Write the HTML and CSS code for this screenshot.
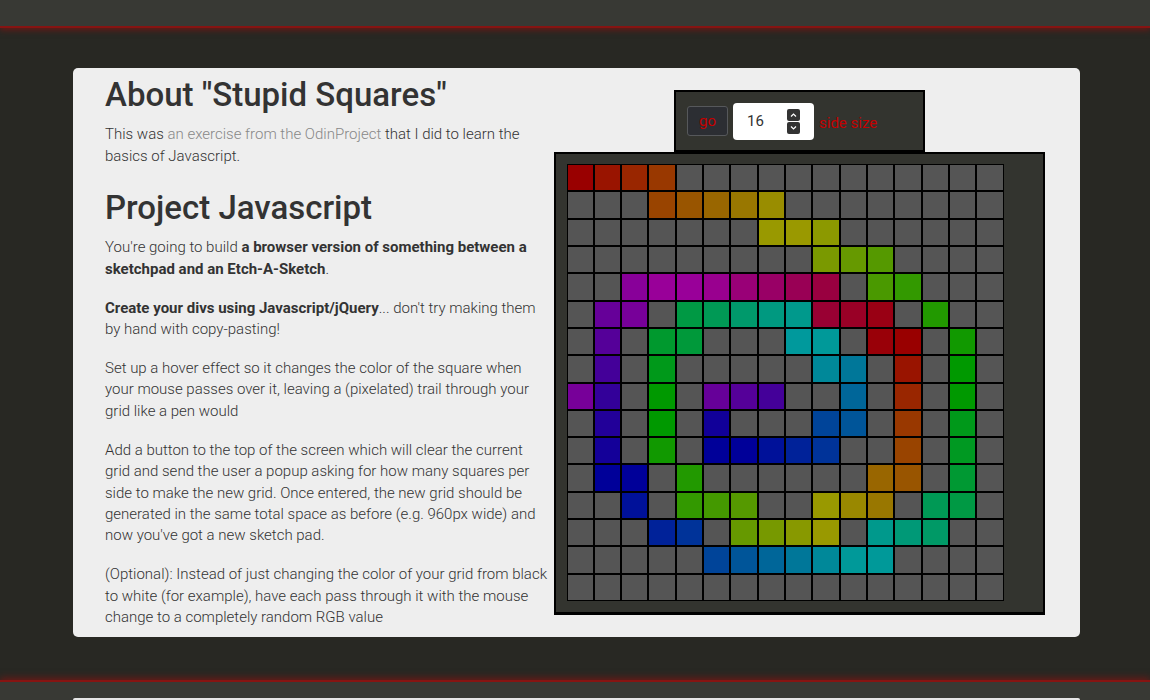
FILE: index.html
```html
<!DOCTYPE html>
<html lang="en">
<head>
<meta charset="utf-8">
<title>Stupid Squares</title>
<link rel="stylesheet" href="styles.css">
</head>
<body>
<header class="topbar"></header>
<main class="card">
  <section class="about">
    <h1>About "Stupid Squares"</h1>
    <p>This was <a href="#">an exercise from the OdinProject</a> that I did to learn the basics of Javascript.</p>
    <h2>Project Javascript</h2>
    <p>You're going to build <strong>a browser version of something between a sketchpad and an Etch-A-Sketch</strong>.</p>
    <p><strong>Create your divs using Javascript/jQuery</strong>... don't try making them by hand with copy-pasting!</p>
    <p>Set up a hover effect so it changes the color of the square when your mouse passes over it, leaving a (pixelated) trail through your grid like a pen would</p>
    <p>Add a button to the top of the screen which will clear the current grid and send the user a popup asking for how many squares per side to make the new grid. Once entered, the new grid should be generated in the same total space as before (e.g. 960px wide) and now you've got a new sketch pad.</p>
    <p>(Optional): Instead of just changing the color of your grid from black to white (for example), have each pass through it with the mouse change to a completely random RGB value</p>
  </section>
  <section class="pad">
    <div class="controls">
      <button class="go">go</button>
      <div class="num">
        <span class="num-value">16</span>
        <svg class="spin" width="13" height="25" viewBox="0 0 13 25">
          <rect x="0" y="0" width="13" height="12" rx="2" fill="#333"/>
          <rect x="0" y="13" width="13" height="12" rx="2" fill="#333"/>
          <polyline points="4,7.5 6.5,5 9,7.5" fill="none" stroke="#fff" stroke-width="1.2"/>
          <polyline points="4,17.5 6.5,20 9,17.5" fill="none" stroke="#fff" stroke-width="1.2"/>
        </svg>
      </div>
      <span class="label">side size</span>
    </div>
    <div class="frame">
      <div class="grid">
        <div class="cell" style="background:#990000"></div><div class="cell" style="background:#991400"></div><div class="cell" style="background:#992600"></div><div class="cell" style="background:#993800"></div><div class="cell"></div><div class="cell"></div><div class="cell"></div><div class="cell"></div><div class="cell"></div><div class="cell"></div><div class="cell"></div><div class="cell"></div><div class="cell"></div><div class="cell"></div><div class="cell"></div><div class="cell"></div>
        <div class="cell"></div><div class="cell"></div><div class="cell"></div><div class="cell" style="background:#994400"></div><div class="cell" style="background:#995500"></div><div class="cell" style="background:#996600"></div><div class="cell" style="background:#997700"></div><div class="cell" style="background:#998d00"></div><div class="cell"></div><div class="cell"></div><div class="cell"></div><div class="cell"></div><div class="cell"></div><div class="cell"></div><div class="cell"></div><div class="cell"></div>
        <div class="cell"></div><div class="cell"></div><div class="cell"></div><div class="cell"></div><div class="cell"></div><div class="cell"></div><div class="cell"></div><div class="cell" style="background:#999900"></div><div class="cell" style="background:#9a9900"></div><div class="cell" style="background:#8c9900"></div><div class="cell"></div><div class="cell"></div><div class="cell"></div><div class="cell"></div><div class="cell"></div><div class="cell"></div>
        <div class="cell"></div><div class="cell"></div><div class="cell"></div><div class="cell"></div><div class="cell"></div><div class="cell"></div><div class="cell"></div><div class="cell"></div><div class="cell"></div><div class="cell" style="background:#7a9900"></div><div class="cell" style="background:#669900"></div><div class="cell" style="background:#559900"></div><div class="cell"></div><div class="cell"></div><div class="cell"></div><div class="cell"></div>
        <div class="cell"></div><div class="cell"></div><div class="cell" style="background:#880099"></div><div class="cell" style="background:#990099"></div><div class="cell" style="background:#990099"></div><div class="cell" style="background:#99008f"></div><div class="cell" style="background:#990077"></div><div class="cell" style="background:#990066"></div><div class="cell" style="background:#990055"></div><div class="cell" style="background:#990040"></div><div class="cell"></div><div class="cell" style="background:#4a9900"></div><div class="cell" style="background:#339900"></div><div class="cell"></div><div class="cell"></div><div class="cell"></div>
        <div class="cell"></div><div class="cell" style="background:#660099"></div><div class="cell" style="background:#770099"></div><div class="cell"></div><div class="cell" style="background:#009944"></div><div class="cell" style="background:#009955"></div><div class="cell" style="background:#00996b"></div><div class="cell" style="background:#009980"></div><div class="cell" style="background:#00998c"></div><div class="cell" style="background:#990033"></div><div class="cell" style="background:#990026"></div><div class="cell" style="background:#990014"></div><div class="cell"></div><div class="cell" style="background:#229900"></div><div class="cell"></div><div class="cell"></div>
        <div class="cell"></div><div class="cell" style="background:#550099"></div><div class="cell"></div><div class="cell" style="background:#00992e"></div><div class="cell" style="background:#00993a"></div><div class="cell"></div><div class="cell"></div><div class="cell"></div><div class="cell" style="background:#00999c"></div><div class="cell" style="background:#009999"></div><div class="cell"></div><div class="cell" style="background:#990008"></div><div class="cell" style="background:#990000"></div><div class="cell"></div><div class="cell" style="background:#119900"></div><div class="cell"></div>
        <div class="cell"></div><div class="cell" style="background:#440099"></div><div class="cell"></div><div class="cell" style="background:#00991a"></div><div class="cell"></div><div class="cell"></div><div class="cell"></div><div class="cell"></div><div class="cell"></div><div class="cell" style="background:#008899"></div><div class="cell" style="background:#007799"></div><div class="cell"></div><div class="cell" style="background:#991400"></div><div class="cell"></div><div class="cell" style="background:#009900"></div><div class="cell"></div>
        <div class="cell" style="background:#770099"></div><div class="cell" style="background:#330099"></div><div class="cell"></div><div class="cell" style="background:#009900"></div><div class="cell"></div><div class="cell" style="background:#660099"></div><div class="cell" style="background:#550099"></div><div class="cell" style="background:#440099"></div><div class="cell"></div><div class="cell"></div><div class="cell" style="background:#006699"></div><div class="cell"></div><div class="cell" style="background:#992600"></div><div class="cell"></div><div class="cell" style="background:#009900"></div><div class="cell"></div>
        <div class="cell"></div><div class="cell" style="background:#220099"></div><div class="cell"></div><div class="cell" style="background:#009900"></div><div class="cell"></div><div class="cell" style="background:#110099"></div><div class="cell"></div><div class="cell"></div><div class="cell"></div><div class="cell" style="background:#004499"></div><div class="cell" style="background:#005599"></div><div class="cell"></div><div class="cell" style="background:#993800"></div><div class="cell"></div><div class="cell" style="background:#00991a"></div><div class="cell"></div>
        <div class="cell"></div><div class="cell" style="background:#140099"></div><div class="cell"></div><div class="cell" style="background:#119900"></div><div class="cell"></div><div class="cell" style="background:#000099"></div><div class="cell" style="background:#000099"></div><div class="cell" style="background:#001199"></div><div class="cell" style="background:#002299"></div><div class="cell" style="background:#003399"></div><div class="cell"></div><div class="cell"></div><div class="cell" style="background:#994400"></div><div class="cell"></div><div class="cell" style="background:#009922"></div><div class="cell"></div>
        <div class="cell"></div><div class="cell" style="background:#000099"></div><div class="cell" style="background:#000099"></div><div class="cell"></div><div class="cell" style="background:#229900"></div><div class="cell"></div><div class="cell"></div><div class="cell"></div><div class="cell"></div><div class="cell"></div><div class="cell"></div><div class="cell" style="background:#996600"></div><div class="cell" style="background:#995500"></div><div class="cell"></div><div class="cell" style="background:#009933"></div><div class="cell"></div>
        <div class="cell"></div><div class="cell"></div><div class="cell" style="background:#001199"></div><div class="cell"></div><div class="cell" style="background:#339900"></div><div class="cell" style="background:#449900"></div><div class="cell" style="background:#559900"></div><div class="cell"></div><div class="cell"></div><div class="cell" style="background:#999900"></div><div class="cell" style="background:#998800"></div><div class="cell" style="background:#997700"></div><div class="cell"></div><div class="cell" style="background:#009955"></div><div class="cell" style="background:#009944"></div><div class="cell"></div>
        <div class="cell"></div><div class="cell"></div><div class="cell"></div><div class="cell" style="background:#002299"></div><div class="cell" style="background:#003399"></div><div class="cell"></div><div class="cell" style="background:#669900"></div><div class="cell" style="background:#779900"></div><div class="cell" style="background:#889900"></div><div class="cell" style="background:#999900"></div><div class="cell"></div><div class="cell" style="background:#00998c"></div><div class="cell" style="background:#009977"></div><div class="cell" style="background:#009966"></div><div class="cell"></div><div class="cell"></div>
        <div class="cell"></div><div class="cell"></div><div class="cell"></div><div class="cell"></div><div class="cell"></div><div class="cell" style="background:#004499"></div><div class="cell" style="background:#005599"></div><div class="cell" style="background:#006699"></div><div class="cell" style="background:#007799"></div><div class="cell" style="background:#008899"></div><div class="cell" style="background:#009999"></div><div class="cell" style="background:#009999"></div><div class="cell"></div><div class="cell"></div><div class="cell"></div><div class="cell"></div>
        <div class="cell"></div><div class="cell"></div><div class="cell"></div><div class="cell"></div><div class="cell"></div><div class="cell"></div><div class="cell"></div><div class="cell"></div><div class="cell"></div><div class="cell"></div><div class="cell"></div><div class="cell"></div><div class="cell"></div><div class="cell"></div><div class="cell"></div><div class="cell"></div>
      </div>
    </div>
  </section>
</main>
<footer class="bottombar">
  <div class="next-card"></div>
</footer>
</body>
</html>
```
FILE: styles.css
```css
html, body {
  margin: 0;
  padding: 0;
}

body {
  background: #282823;
  font-family: Roboto, "Noto Sans", "Liberation Sans", sans-serif;
  color: #333;
  overflow: hidden;
  height: 700px;
}

.topbar {
  position: relative;
  z-index: 1;
  height: 26px;
  background: #383934;
  border-bottom: 2px solid #861412;
  box-shadow: 0 2px 6px rgba(130, 20, 18, 0.75);
}

.card {
  width: 1007px;
  box-sizing: border-box;
  margin: 40px 0 0 73px;
  background: #eeeeee;
  border-radius: 5px;
  padding: 0 35px 8px 32px;
  display: grid;
  grid-template-columns: 445px 491px;
  column-gap: 4px;
  align-items: start;
}

.about h1,
.about h2 {
  font-size: 33px;
  font-weight: 500;
  line-height: 1.1;
  margin: 22.5px 0 11.3px;
  color: #333;
}

.about h1 {
  margin-top: 8.6px;
}

.about p {
  font-size: 15px;
  font-weight: 300;
  line-height: 21.43px;
  margin: 0 0 17.5px;
}

.about p:last-child {
  margin-bottom: 0;
}

.about a {
  color: #888;
  text-decoration: none;
}

.about strong {
  font-weight: 700;
}

.pad {
  display: flex;
  flex-direction: column;
  align-items: center;
  padding-top: 22px;
}

.controls {
  box-sizing: border-box;
  width: 251px;
  height: 62px;
  border: 2px solid #000;
  background: #33342f;
  display: flex;
  align-items: center;
  padding-left: 11px;
}

.go {
  box-sizing: border-box;
  width: 41px;
  height: 30px;
  padding: 0;
  border: 1px solid #56585b;
  border-radius: 3px;
  background: #2c2e33;
  color: #c40000;
  font-family: Roboto, "Noto Sans", sans-serif;
  font-size: 15px;
}

.num {
  box-sizing: border-box;
  width: 81px;
  height: 37px;
  margin-left: 5px;
  background: #fff;
  border-radius: 4px;
  display: flex;
  align-items: center;
  padding: 0 14px;
  font-size: 15px;
  color: #333;
}

.num-value {
  flex: 1;
}

.spin {
  display: block;
}

.label {
  margin: 3px 0 0 5px;
  color: #c40000;
  font-size: 15px;
}

.frame {
  box-sizing: border-box;
  width: 491px;
  border: 2px solid #000;
  border-bottom-width: 3px;
  background: #33342f;
  padding: 10px 40px 11px 10.5px;
}

.grid {
  width: 437px;
  height: 437px;
  display: grid;
  grid-template-columns: repeat(16, 1fr);
  grid-template-rows: repeat(16, 1fr);
}

.cell {
  box-sizing: border-box;
  border: 1px solid #000;
  background: #555555;
}

.bottombar {
  position: relative;
  margin-top: 43px;
  height: 18px;
  background: #383934;
  border-top: 2px solid #861412;
  box-shadow: 0 -2px 7px rgba(130, 20, 18, 0.75);
  padding-top: 16px;
  box-sizing: content-box;
}

.next-card {
  width: 1007px;
  height: 2px;
  margin-left: 73px;
  background: #e6e6e6;
  border-radius: 3px 3px 0 0;
}
```
